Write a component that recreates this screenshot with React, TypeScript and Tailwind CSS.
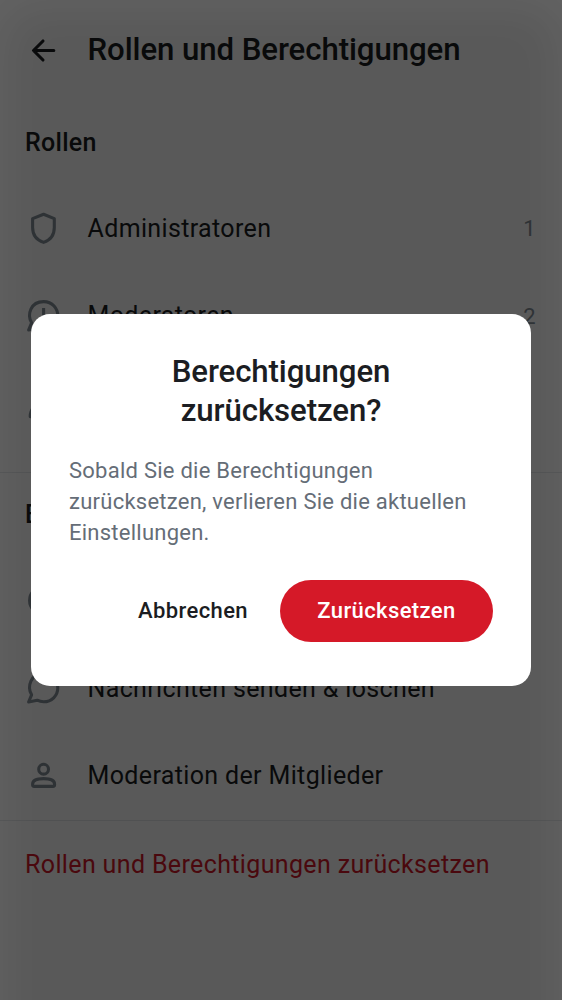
import type { ReactNode } from "react";

const stroke = {
  fill: "none",
  stroke: "currentColor",
  strokeWidth: 3.1,
  strokeLinejoin: "round" as const,
};

function Icon({ children }: { children: ReactNode }) {
  return (
    <svg className="h-[38px] w-[38px] shrink-0 text-[#858f99]" viewBox="0 0 38 38" {...stroke}>
      {children}
    </svg>
  );
}

const Shield = () => (
  <Icon>
    <path d="M18.6 4.2L29.3 8.6V17.6C29.3 25.1 25.3 30.2 18.6 32.4C11.9 30.2 7.6 25.1 7.6 17.6V8.6Z" />
  </Icon>
);

const bubble =
  "M3.6 33L6.6 25.8C1.8 17.5 5.6 4.6 18.6 4.6C27.6 4.6 32.8 11.8 32.8 18.8C32.8 26.8 26.6 32.8 18.6 32.8C16.6 32.8 14.1 32.2 12.2 31.2Z";

const Chat = () => (
  <Icon>
    <path d={bubble} />
  </Icon>
);

const ChatAlert = () => (
  <Icon>
    <path d={bubble} />
    <path d="M18.6 11V20" />
  </Icon>
);

const Person = () => (
  <Icon>
    <circle cx="18.6" cy="12.2" r="4.9" />
    <path d="M7.6 27.2C7.6 23.4 12.4 21.6 18.6 21.6C24.8 21.6 29.6 23.4 29.6 27.2V27.8Q29.6 29.4 28 29.4H9.2Q7.6 29.4 7.6 27.8Z" />
  </Icon>
);

const Member = () => (
  <Icon>
    <path d="M5.2 32.6C5.2 28.5 6.6 25.5 9 22.5H29L32 32.6Z" fill="currentColor" />
  </Icon>
);

const Info = () => (
  <Icon>
    <circle cx="18.6" cy="18.6" r="14" fill="currentColor" />
  </Icon>
);

function Row({ icon, label, count }: { icon: ReactNode; label?: string; count?: string }) {
  return (
    <li className="flex h-[87.4px] items-center pr-[26.5px] pl-[25px]">
      {icon}
      {label && <span className="ml-[24.5px] flex-1 text-[25px] tracking-[0.36px] whitespace-nowrap">{label}</span>}
      {count && <span className="text-[22px] text-[#858f99]">{count}</span>}
    </li>
  );
}

export default function App() {
  return (
    <div className="relative h-[1000px] w-[562px] overflow-hidden bg-white font-['Roboto',sans-serif] text-[#1b1d22]">
      <header className="flex h-[101px] items-center pl-[25px]">
        <svg className="h-[38px] w-[38px]" viewBox="0 0 38 38" {...stroke} strokeLinecap="round">
          <path d="M28.8 18.5H8.8M18 9L8.5 18.5L18 28" />
        </svg>
        <h1 className="ml-[24.5px] text-[31.2px] font-medium tracking-[-0.08px] whitespace-nowrap">
          Rollen und Berechtigungen
        </h1>
      </header>
      <main>
        <h2 className="flex h-[84px] items-center pl-[25px] text-[25px] font-medium tracking-[0.3px]">Rollen</h2>
        <ul>
          <Row icon={<Shield />} label="Administratoren" count="1" />
          <Row icon={<ChatAlert />} label="Moderatoren" count="2" />
          <Row icon={<Member />} />
        </ul>
        <div className="mt-[25px] border-t border-[#e4e7ea]" />
        <h2 className="flex h-[84px] items-center pl-[25px] text-[25px] font-medium tracking-[0.3px]">
          Berechtigungen
        </h2>
        <ul>
          <Row icon={<Info />} />
          <Row icon={<Chat />} label="Nachrichten senden &amp; löschen" />
          <Row icon={<Person />} label="Moderation der Mitglieder" />
        </ul>
        <div className="mt-px border-t border-[#e4e7ea]" />
        <button className="flex h-[87px] w-full items-center pl-[25px] text-[25px] tracking-[0.36px] whitespace-nowrap text-[#d51928]">
          Rollen und Berechtigungen zurücksetzen
        </button>
      </main>

      <div className="absolute inset-0 bg-black/65 px-[31px] pt-[314px]">
        <div className="pointer-events-none absolute inset-x-0 top-0 -bottom-[60px] shadow-[inset_0_4px_54px_rgba(255,255,255,0.07)]" />
        <div role="dialog" className="relative flex h-[372px] flex-col rounded-[19px] bg-white px-[38px] pt-[38px]">
          <h2 className="text-center text-[31.2px] leading-[39px] font-medium tracking-[-0.1px]">
            Berechtigungen
            <br />
            zurücksetzen?
          </h2>
          <p className="mt-[25px] text-[22px] leading-[31.2px] tracking-[0.25px] text-[#656d77]">
            Sobald Sie die Berechtigungen
            <br />
            zurücksetzen, verlieren Sie die aktuellen
            <br />
            Einstellungen.
          </p>
          <div className="mt-[31px] flex h-[62px] items-center justify-end gap-[32px] text-[22px] font-medium tracking-[0.39px]">
            <button>Abbrechen</button>
            <button className="h-[62px] w-[213px] rounded-full bg-[#d51928] text-white">Zurücksetzen</button>
          </div>
        </div>
      </div>
    </div>
  );
}
